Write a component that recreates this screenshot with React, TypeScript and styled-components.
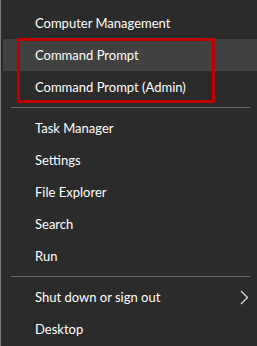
import React from 'react'
import styled, { createGlobalStyle } from 'styled-components'

const GlobalStyle = createGlobalStyle`
  html, body {
    margin: 0;
    padding: 0;
    background: #2b2b2b;
  }
`

const Menu = styled.nav`
  box-sizing: border-box;
  width: 257px;
  height: 346px;
  padding-top: 7px;
  background: #2b2b2b;
  border-left: 1px solid #7d7d7d;
  font-family: Lato, 'Noto Sans', sans-serif;
  font-size: 13px;
  color: #ffffff;
  overflow: hidden;
`

const Item = styled.div<{ $active?: boolean }>`
  display: flex;
  align-items: center;
  justify-content: space-between;
  height: 32px;
  margin-left: 2px;
  padding-left: 32px;
  padding-right: 8px;
  background: ${p => (p.$active ? '#414141' : 'transparent')};
`

const Marked = styled.div`
  position: relative;

  &::after {
    content: '';
    position: absolute;
    top: -1px;
    bottom: 0;
    left: 16px;
    width: 198px;
    box-sizing: border-box;
    border: 3px solid #c00000;
    pointer-events: none;
  }
`

const Separator = styled.div`
  height: 9px;
  display: flex;
  align-items: center;
  padding-left: 10px;
  padding-right: 7px;

  &::before {
    content: '';
    flex: 1;
    height: 1px;
    background: #6e6e6e;
  }
`

const Chevron = () => (
  <svg width="9" height="15" viewBox="0 0 9 15">
    <path d="M1 1 L7.5 7.5 L1 14" fill="none" stroke="#e6e6e6" strokeWidth="1.1" />
  </svg>
)

const App = () => {
  return (
    <>
      <GlobalStyle />
      <Menu>
        <Item>Computer Management</Item>
        <Marked>
          <Item $active>Command Prompt</Item>
          <Item>Command Prompt (Admin)</Item>
        </Marked>
        <Separator />
        <Item>Task Manager</Item>
        <Item>Settings</Item>
        <Item>File Explorer</Item>
        <Item>Search</Item>
        <Item>Run</Item>
        <Separator />
        <Item>
          Shut down or sign out
          <Chevron />
        </Item>
        <Item>Desktop</Item>
      </Menu>
    </>
  )
}

export default App
